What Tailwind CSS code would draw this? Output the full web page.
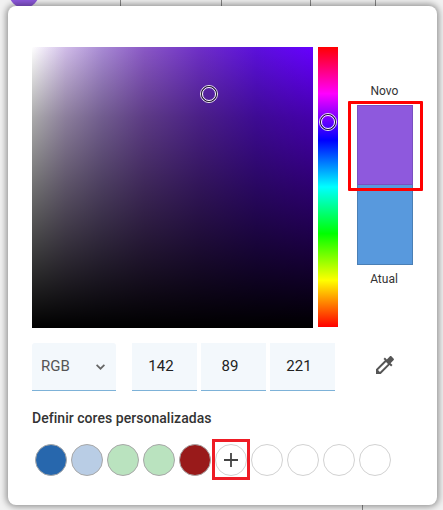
<!DOCTYPE html>
<html lang="en">
<head>
  <meta charset="UTF-8" />
  <title>Color picker</title>
  <script src="https://cdn.jsdelivr.net/npm/@tailwindcss/browser@4"></script>
</head>
<body class="bg-[#f1f1f1] font-['Roboto',sans-serif] text-[#333]">
  <div class="relative w-[443px] h-[510px] overflow-hidden pl-[8px] pt-[6px]">
    <!-- page behind the dialog -->
    <div class="absolute left-[9px] top-[-22px] w-[30px] h-[30px] rounded-full bg-[#8e59dd]"></div>
    <div class="absolute left-[120px] top-0 w-px h-[6px] bg-[#888]"></div>
    <div class="absolute left-[221px] top-0 w-px h-[6px] bg-[#888]"></div>
    <div class="absolute left-[310px] top-0 w-px h-[6px] bg-[#888]"></div>
    <div class="absolute left-[375px] top-0 w-px h-[6px] bg-[#888]"></div>
    <div class="absolute left-[362px] bottom-0 w-px h-[5px] bg-[#888]"></div>

    <!-- dialog -->
    <div class="relative w-[429px] h-[499px] bg-white rounded-[8px] shadow-[0_0_6px_2px_rgba(0,0,0,0.38)] pl-[24px] pt-[41px]">
      <div class="flex">
        <div class="relative w-[281px] h-[281px] bg-[linear-gradient(to_bottom,rgba(0,0,0,0),rgba(0,0,0,0.33)_25%,rgba(0,0,0,0.56)_50%,rgba(0,0,0,0.78)_75%,black),linear-gradient(to_right,#ffffff,#d0bce8_12%,#a88ad4_25%,#8a58c6_40%,#6e2ec8_60%,#5c10dc_80%,#6600ff)]">
          <svg class="absolute left-[168px] top-[38px]" width="18" height="18" viewBox="0 0 18 18" fill="none">
            <circle cx="9" cy="9" r="8.500" stroke="#e8e8e8"/>
            <circle cx="9" cy="9" r="7.500" stroke="#222"/>
            <circle cx="9" cy="9" r="6.500" stroke="#fff"/>
          </svg>
        </div>
        <div class="relative ml-[5px] w-[20px] h-[280px] bg-[linear-gradient(to_bottom,#ff0000,#ff00ff,#0000ff,#00ffff,#00ff00,#ffff00,#ff0000)]">
          <svg class="absolute left-[1px] top-[66px]" width="18" height="18" viewBox="0 0 18 18" fill="none">
            <circle cx="9" cy="9" r="8.500" stroke="#e8e8e8"/>
            <circle cx="9" cy="9" r="7.500" stroke="#222"/>
            <circle cx="9" cy="9" r="6.500" stroke="#fff"/>
          </svg>
        </div>
        <div class="relative ml-[19px] w-[56px] flex flex-col items-center pt-[37px]">
          <span class="text-[12px] leading-[14px] mb-[7px] mr-[1px]">Novo</span>
          <div class="w-[56px] h-[80px] bg-[#8e59dd] border border-[#7a4fc0]"></div>
          <div class="w-[56px] h-[80px] bg-[#5899dd] border border-[#4a7fb5] border-t-0"></div>
          <span class="text-[12px] leading-[14px] mt-[7px] mr-[2px]">Atual</span>
          <!-- red highlight -->
          <div class="absolute left-[-9px] top-[54px] w-[75px] h-[90px] border-[3px] border-[#ff0000] rounded-[1px]"></div>
        </div>
      </div>

      <div class="flex items-center mt-[15px]">
        <div class="w-[84px] h-[48px] bg-[#f3f8fc] border-b border-[#7db2d8] rounded-t-[3px] flex items-center justify-between pl-[9px] pr-[11px] text-[15px]">
          <span class="text-[#555]">RGB</span>
          <svg width="9" height="6" viewBox="0 0 9 6" fill="none" stroke="#666" stroke-width="1.700"><path d="M.6 .8l3.900 3.900L8.400 .8"/></svg>
        </div>
        <div class="ml-[16px] w-[65px] h-[48px] bg-[#f3f8fc] border-b border-[#7db2d8] flex items-center justify-center pr-[7px] text-[15px] text-[#222]">142</div>
        <div class="ml-[4px] w-[65px] h-[48px] bg-[#f3f8fc] border-b border-[#7db2d8] flex items-center justify-center pr-[7px] text-[15px] text-[#222]">89</div>
        <div class="ml-[4px] w-[65px] h-[48px] bg-[#f3f8fc] border-b border-[#7db2d8] flex items-center justify-center pr-[7px] text-[15px] text-[#222]">221</div>
        <svg class="ml-[38px] mb-[4px]" width="24" height="24" viewBox="0 0 24 24" fill="#555">
          <path d="M20.710 5.630l-2.340-2.340c-.39-.39-1.020-.39-1.410 0l-3.120 3.120-1.930-1.910-1.410 1.410 1.420 1.420L3 16.250V21h4.750l8.920-8.920 1.420 1.420 1.410-1.410-1.920-1.920 3.120-3.120c.4-.4.4-1.030.01-1.420zM6.920 19L5 17.080l8.060-8.060 1.920 1.920L6.920 19z"/>
        </svg>
      </div>

      <div class="mt-[19px] text-[14px] leading-[16px] font-medium tracking-[0.04px] text-[#333]">Definir cores personalizadas</div>

      <div class="relative flex gap-[4px] mt-[18px] pl-[3px]">
        <div class="w-[32px] h-[32px] rounded-full bg-[#2767ad] border border-[#a8a8a8]"></div>
        <div class="w-[32px] h-[32px] rounded-full bg-[#b9cde5] border border-[#a8a8a8]"></div>
        <div class="w-[32px] h-[32px] rounded-full bg-[#bae3bf] border border-[#a8a8a8]"></div>
        <div class="w-[32px] h-[32px] rounded-full bg-[#bae3bf] border border-[#a8a8a8]"></div>
        <div class="w-[32px] h-[32px] rounded-full bg-[#991a1a] border border-[#a8a8a8]"></div>
        <div class="w-[32px] h-[32px] rounded-full bg-white border border-[#d2d2d2] flex items-center justify-center">
          <svg width="16" height="16" viewBox="0 0 16 16" stroke="#444" stroke-width="1.800"><path d="M8 1v14M1 8h14"/></svg>
        </div>
        <div class="w-[32px] h-[32px] rounded-full bg-white border border-[#d2d2d2]"></div>
        <div class="w-[32px] h-[32px] rounded-full bg-white border border-[#d2d2d2]"></div>
        <div class="w-[32px] h-[32px] rounded-full bg-white border border-[#d2d2d2]"></div>
        <div class="w-[32px] h-[32px] rounded-full bg-white border border-[#d2d2d2]"></div>
        <!-- red highlight on the add button -->
        <div class="absolute left-[180px] top-[-5px] w-[38px] h-[41px] border-[3px] border-[#ee1c25]"></div>
      </div>
    </div>
  </div>
</body>
</html>
